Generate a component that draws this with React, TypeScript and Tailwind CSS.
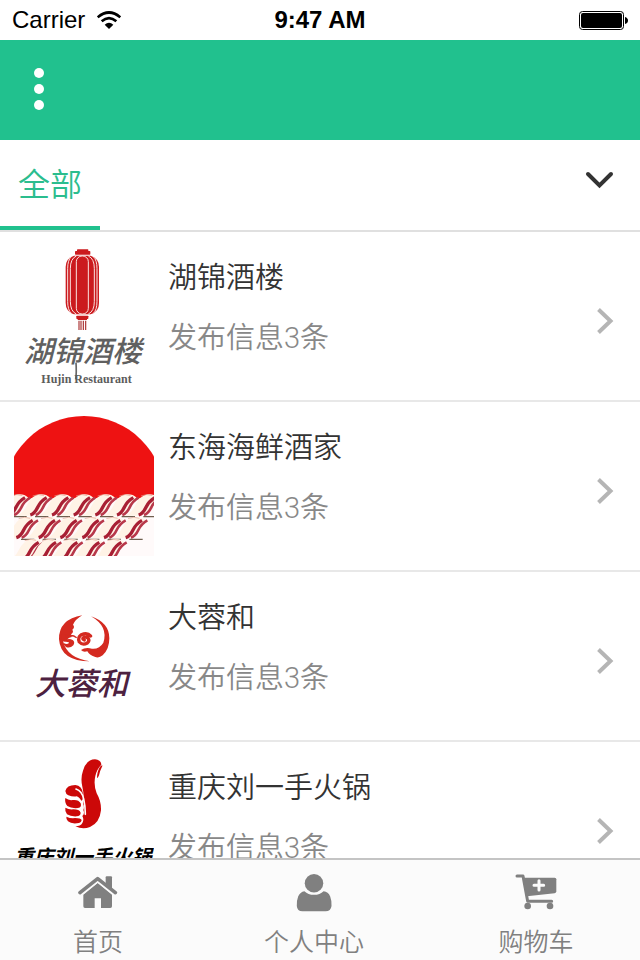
import type { ReactNode } from "react"

const CJK = "font-['Roboto','Noto_Sans_CJK_SC',sans-serif]"

function HujinLogo() {
  return (
    <svg viewBox="42 30 420 420" className="size-full">
      <g fill="#cb1a1e">
        <rect x="231" y="40" width="34" height="8" rx="2" />
        <rect x="225" y="45" width="46" height="11" rx="2" />
        <path d="M222 59h50q25 8 25 34v108q0 26-25 34h-50q-25-8-25-34V93q0-26 25-34z" />
        <rect x="229" y="239" width="36" height="10" rx="2" />
        <rect x="233" y="246" width="28" height="6" />
      </g>
      <g fill="none" stroke="#fbe3e0" strokeWidth="3">
        <rect x="229" y="60" width="36" height="174" rx="17" />
        <path d="M229 60q-18 8-18 38v98q0 30 18 38M265 60q18 8 18 38v98q0 30-18 38" />
        <path d="M214 62q-11 10-11 36v98q0 26 11 36M280 62q11 10 11 36v98q0 26-11 36" />
      </g>
      <path d="M237 254v28M243 254v28M250 254v28M257 254v28" stroke="#a33" strokeWidth="3.5" />
      <path d="M228 380q2 30-1 50" fill="none" stroke="#666" strokeWidth="5" />
      <text x="72" y="379" fontSize="88" fill="#606060" className="font-['Noto_Sans_CJK_SC',sans-serif] font-medium italic">
        湖锦酒楼
      </text>
      <text x="124" y="440" fontSize="36" fill="#5c5c5c" className="font-['Liberation_Serif',serif] font-bold">
        Hujin Restaurant
      </text>
    </svg>
  )
}

const ropes = [
  { y: 270, xs: [85, 150, 215, 280, 345, 410, 475] },
  { y: 338, xs: [108, 175, 240, 306, 371, 436] },
  { y: 404, xs: [126, 178, 242, 308, 374] }
]

function DonghaiLogo() {
  return (
    <svg viewBox="42 33 420 420" className="size-full">
      <circle cx="252" cy="275" r="242" fill="#ee1212" />
      <path d="M42 280h420v173H42z" fill="#fffafa" />
      {ropes.map(({ y, xs }) => (
        <g key={y} fill="none">
          {xs.map((x) => (
            <g key={x}>
              <path
                d={`M${x - 100} ${y + 62}q18-6 30-30q14-30 38-34q20-2 32 10q-14 8-24 28q-12 24-34 26z`}
                fill="#fff3e6"
              />
              <path d={`M${x - 10} ${y + 8}q-18 10-27 29t-22 23`} stroke="#a81f34" strokeWidth="10" />
              <path d={`M${x + 6} ${y + 8}q-18 10-27 29t-22 23`} stroke="#b8384a" strokeWidth="8" />
              <path d={`M${x - 52} ${y + 3}q18-8 34-1`} stroke="#e2a594" strokeWidth="2" />
            </g>
          ))}
          <path
            d={`M${xs[0] - 45} ${y + 65}H${xs[xs.length - 1] + 12}`}
            stroke="#6f5f4f"
            strokeWidth="4"
            strokeDasharray="40 25"
          />
        </g>
      ))}
    </svg>
  )
}

function DarongheLogo() {
  return (
    <svg viewBox="42 -12 420 420" className="size-full">
      <g fill="#d42a20">
        <path d="M247 76Q176 88 177 148Q182 214 270 214Q202 204 190 156Q188 140 198 143Q210 144 214 132Q222 126 217 119Q226 112 219 104Q226 88 247 76z" />
        <path d="M273 79Q328 98 328 145Q328 178 308 196Q296 206 284 200Q268 196 262 184Q250 188 243 180Q256 171 276 176Q298 178 310 158Q326 110 273 79z" />
        <path d="M184 136q12-8 20-1l14 5q-12 2-16 8q8-2 16 2q8 6 2 16q-10 10-22 5q-8-4-7-12q9 5 15 1q4-5-8-5q-12 2-14-7z" />
      </g>
      <path
        d="M253 150q-6-2-4-6q8-6 15 0q6 8-2 15q-14 8-24-3q-6-14 6-22q18-8 28 4"
        fill="none"
        stroke="#d42a20"
        strokeWidth="10"
        strokeLinecap="round"
      />
      <path d="M198 140q18-8 32 3" fill="none" stroke="#d42a20" strokeWidth="4" />
      <text x="104" y="315" fontSize="93" fill="#4d2140" className="font-['Noto_Sans_CJK_SC',sans-serif] font-medium italic">
        大蓉和
      </text>
    </svg>
  )
}

function LiuyishouLogo() {
  return (
    <svg viewBox="42 48 420 420" className="size-full">
      <g fill="#cc0808">
        <path d="M247 140q-6-26 2-48q10-34 36-34q18 2 19 16q-14 14-18 34q-6 26 4 52q14 24 13 51q-4 38-33 50q-22 8-44-2q16 0 21-10q6-10 0-21q8-6 3-18q4-10-1-18q4-28-2-52z" />
        <path d="M300 80q8-8 7-2q-7 14-10 28q-4 10-6 8q0-20 9-34z" />
        <path d="M196 153q4-18 30-18q20 2 23 26q1 20-5 21q-8-12-14-13q-12 2-25-3q-8-4-9-13z" />
        <path d="M196 174q10 8 22 6q18-2 24 10q4 12-8 14q-20 2-32-6q-9-10-6-24z" />
        <path d="M196 203q12 7 24 5q18 0 22 10q0 10-12 11q-18 1-29-6q-7-8-5-20z" />
        <path d="M199 230q14 6 26 4q18 0 20 6q-2 10-14 10q-18 2-27-6q-6-6-5-14z" />
      </g>
      <path d="M228 147q18 6 23 30q5 22 5 46" fill="none" stroke="#fff" strokeWidth="5" strokeLinecap="round" />
      <text x="42" y="371" fontSize="59" fill="#000" className="font-['Noto_Sans_CJK_SC',sans-serif] font-bold italic">
        重庆刘一手火锅
      </text>
    </svg>
  )
}

function HomeIcon() {
  return (
    <svg viewBox="236 60 120 102" className="h-[34px] w-10" fill="#808080">
      <path d="M319 67q0-3 3-3h13q3 0 3 3v36l-19-15z" />
      <path d="M252 119l43-35l43 35v35q0 5-5 5h-28v-29h-19v29h-29q-5 0-5-5z" />
      <path d="M241 118l54-43l54 43" fill="none" stroke="#fbfbfb" strokeWidth="13" />
      <path d="M242 113l53-42l53 42" fill="none" stroke="#808080" strokeWidth="11" strokeLinecap="round" strokeLinejoin="round" />
    </svg>
  )
}

function UserIcon() {
  return (
    <svg viewBox="886 52 108 118" className="h-[39px] w-9" fill="#808080">
      <circle cx="940" cy="83" r="28" />
      <path d="M911 107q11 11 29 11t29-11q14 1 20 16q5 13 4 29q-2 16-18 16h-70q-16 0-17-16q-1-16 4-29q6-14 19-16z" />
    </svg>
  )
}

function CartIcon() {
  return (
    <svg viewBox="344 288 126 108" className="h-9 w-[42px]" fill="#808080">
      <path d="M350 294h18l14 76h72" fill="none" stroke="#808080" strokeWidth="9" strokeLinecap="round" strokeLinejoin="round" />
      <path d="M368 299h95q5 0 5 5v36q0 5-5 6l-83 9z" />
      <circle cx="382" cy="384" r="10" />
      <circle cx="449" cy="384" r="10" />
      <path d="M416 308v28M401 322h29" stroke="#fbfbfb" strokeWidth="9" strokeLinecap="round" />
    </svg>
  )
}

const shops: { name: string; count: number; logo: ReactNode }[] = [
  { name: "湖锦酒楼", count: 3, logo: <HujinLogo /> },
  { name: "东海海鲜酒家", count: 3, logo: <DonghaiLogo /> },
  { name: "大蓉和", count: 3, logo: <DarongheLogo /> },
  { name: "重庆刘一手火锅", count: 3, logo: <LiuyishouLogo /> }
]

const tabs = [
  { label: "首页", icon: <HomeIcon /> },
  { label: "个人中心", icon: <UserIcon /> },
  { label: "购物车", icon: <CartIcon /> }
]

function StatusBar() {
  return (
    <div className="grid h-10 shrink-0 grid-cols-3 items-center px-3 font-['Liberation_Sans',sans-serif] text-2xl text-black">
      <div className="flex items-center gap-3">
        <span>Carrier</span>
        <svg viewBox="0 0 72 54" className="h-[18px] w-6">
          <g fill="none" stroke="#000" strokeWidth="8">
            <path d="M2 19Q36-10 70 19" />
            <path d="M14 31q22-19 44 0" />
          </g>
          <path d="M23 41q13-11 26 0L36 54z" />
        </svg>
      </div>
      <span className="text-center font-bold">9:47 AM</span>
      <svg viewBox="0 0 49 19" className="h-[19px] w-[49px] justify-self-end">
        <rect x="0.5" y="0.5" width="44" height="18" rx="3" fill="none" stroke="#000" />
        <rect x="2" y="2" width="41" height="15" rx="2" />
        <path d="M46 6q3 1 3 3.500t-3 3.500z" />
      </svg>
    </div>
  )
}

export default function App() {
  return (
    <div className={`flex h-screen flex-col overflow-hidden bg-white ${CJK}`}>
      <StatusBar />

      <header className="flex h-[100px] shrink-0 items-center bg-[#21c18e] px-6 pb-0.5">
        <button aria-label="菜单" className="flex w-[30px] flex-col items-center gap-1.5">
          <span className="size-2.5 rounded-full bg-white" />
          <span className="size-2.5 rounded-full bg-white" />
          <span className="size-2.5 rounded-full bg-white" />
        </button>
      </header>

      <nav className="flex h-[92px] shrink-0 items-stretch justify-between border-b-2 border-[#e0e0e0]">
        <button className="w-[100px] border-b-4 border-[#21c18e] pt-1 text-[32px] font-[350] text-[#2bbd8e]">
          全部
        </button>
        <button aria-label="展开" className="px-6 pb-2.5">
          <svg viewBox="0 0 32 20" className="h-5 w-8" fill="none" stroke="#333" strokeWidth="4" strokeLinecap="round">
            <path d="M4 4l11.500 11.500L27 4" />
          </svg>
        </button>
      </nav>

      <main className="min-h-0 flex-1 overflow-hidden">
        <ul>
          {shops.map((shop) => (
            <li key={shop.name} className="border-b-2 border-[#e8e8e8]">
              <a href="#" className="flex items-center gap-3.5 p-3.5">
                <div className="size-[140px] shrink-0">{shop.logo}</div>
                <div className="min-w-0 flex-1 self-start pt-0.5 text-[29px] leading-[60px] font-[350]">
                  <h2 className="text-[#333]">{shop.name}</h2>
                  <p className="text-[#888]">发布信息{shop.count}条</p>
                </div>
                <svg viewBox="0 0 20 30" className="mt-2.5 mr-2.5 h-[30px] w-5" fill="none" stroke="#b5b5b5" strokeWidth="4">
                  <path d="M2.500 3.500l12 11.500l-12 11.500" />
                </svg>
              </a>
            </li>
          ))}
        </ul>
      </main>

      <footer className="grid h-[102px] shrink-0 grid-cols-[49fr_59fr_52fr] border-t-2 border-[#c4c4c4] bg-[#fbfbfb]">
        {tabs.map((tab) => (
          <a key={tab.label} href="#" className="flex flex-col items-center pt-[11px] text-[25px] leading-8 font-[350] text-[#808080]">
            <span className="flex h-[42px] items-center">{tab.icon}</span>
            <span className="pt-3.5">{tab.label}</span>
          </a>
        ))}
      </footer>
    </div>
  )
}
